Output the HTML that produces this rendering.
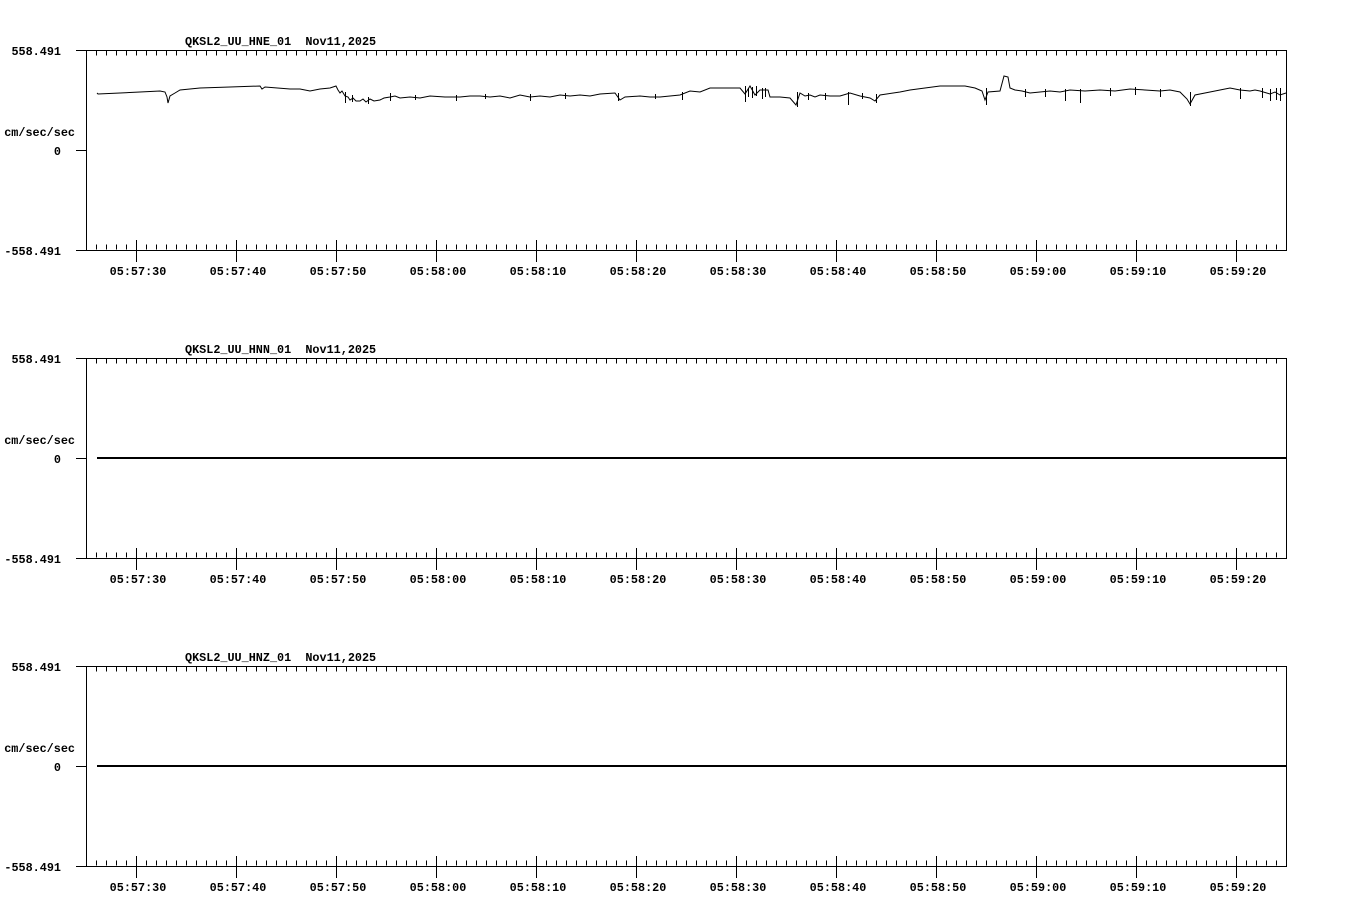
<!DOCTYPE html>
<html><head><meta charset="utf-8"><style>
html,body{margin:0;padding:0;background:#fff;}
svg{display:block}
text{font-family:"Liberation Mono",monospace;font-weight:bold;font-size:11.8px;fill:#000}
</style></head><body>
<svg width="1358" height="924" viewBox="0 0 1358 924" xmlns="http://www.w3.org/2000/svg">
<defs>
<g id="frame" fill="none" stroke="#000" stroke-width="1">
<rect x="86.5" y="50.5" width="1200" height="200"/>
<line x1="76" y1="50.5" x2="86" y2="50.5"/>
<line x1="76" y1="150.5" x2="86" y2="150.5"/>
<line x1="76" y1="250.5" x2="86" y2="250.5"/>
<line x1="96" y1="53" x2="1287" y2="53" stroke-width="5" stroke-dasharray="1 9"/>
<line x1="96" y1="247" x2="1287" y2="247" stroke-width="5" stroke-dasharray="1 9"/>
<line x1="136" y1="251" x2="1287" y2="251" stroke-width="22" stroke-dasharray="1 99"/>
</g>
</defs>

<g transform="translate(0,0)"><use href="#frame"/></g>
<g transform="translate(0,308)"><use href="#frame"/></g>
<g transform="translate(0,616)"><use href="#frame"/></g>

<polyline fill="none" stroke="#000" stroke-width="1" points="97,93 98,94 120,93 140,92 160,91 165,92 167,97 168,103 170,96 175,93 180,90 200,88 230,87 260,86 262,89 265,87 290,89 300,89 310,91 320,89 330,88 336,86 338,90 340,93 342,91 345,96 348,97 350,100 353,98 356,101 360,101 363,99 366,102 370,99 374,101 380,100 384,98 390,97 395,96 400,98 410,97 420,98 430,96 445,97 460,97 470,96 480,96 490,97 500,96 510,98 520,95 530,97 540,96 550,97 560,95 570,96 580,95 590,96 600,94 615,93 620,100 625,97 640,96 650,97 660,97 670,96 680,95 690,91 700,92 710,88 740,88 745,94 750,86 755,95 760,90 768,90 770,97 780,97 790,98 796,105 800,93 805,96 810,95 815,97 820,95 830,96 840,96 850,93 860,96 870,98 875,101 880,95 900,92 910,90 925,88 940,86 965,86 975,88 982,91 985,100 988,92 1000,91 1004,76 1008,77 1010,88 1015,90 1022,91 1030,93 1040,92 1050,91 1060,92 1070,90 1085,91 1100,90 1115,91 1130,89 1145,90 1160,91 1170,90 1180,92 1187,99 1190,104 1195,95 1210,92 1220,90 1230,88 1240,90 1250,91 1255,90 1260,91 1270,94 1275,92 1280,95 1286,93"/>
<g stroke="#000" stroke-width="1">
<line x1="345.5" y1="92" x2="345.5" y2="103"/><line x1="352.5" y1="95" x2="352.5" y2="102"/><line x1="368.5" y1="97" x2="368.5" y2="104"/>
<line x1="390.5" y1="93" x2="390.5" y2="101"/><line x1="415.5" y1="95" x2="415.5" y2="100"/><line x1="456.5" y1="95" x2="456.5" y2="101"/>
<line x1="485.5" y1="94" x2="485.5" y2="99"/><line x1="530.5" y1="94" x2="530.5" y2="101"/><line x1="565.5" y1="93" x2="565.5" y2="99"/>
<line x1="618.5" y1="93" x2="618.5" y2="101"/><line x1="655.5" y1="94" x2="655.5" y2="99"/><line x1="682.5" y1="92" x2="682.5" y2="100"/>
<line x1="745.5" y1="86" x2="745.5" y2="102"/><line x1="748.5" y1="88" x2="748.5" y2="97"/><line x1="752.5" y1="87" x2="752.5" y2="98"/><line x1="756.5" y1="86" x2="756.5" y2="96"/><line x1="762.5" y1="88" x2="762.5" y2="99"/><line x1="765.5" y1="88" x2="765.5" y2="97"/>
<line x1="797.5" y1="92" x2="797.5" y2="107"/><line x1="808.5" y1="93" x2="808.5" y2="100"/><line x1="825.5" y1="93" x2="825.5" y2="100"/>
<line x1="848.5" y1="92" x2="848.5" y2="105"/><line x1="862.5" y1="93" x2="862.5" y2="99"/><line x1="876.5" y1="94" x2="876.5" y2="103"/>
<line x1="986.5" y1="88" x2="986.5" y2="105"/><line x1="1025.5" y1="89" x2="1025.5" y2="97"/><line x1="1045.5" y1="89" x2="1045.5" y2="97"/><line x1="1065.5" y1="89" x2="1065.5" y2="101"/><line x1="1080.5" y1="89" x2="1080.5" y2="103"/>
<line x1="1110.5" y1="88" x2="1110.5" y2="96"/><line x1="1135.5" y1="87" x2="1135.5" y2="95"/><line x1="1160.5" y1="89" x2="1160.5" y2="97"/>
<line x1="1190.5" y1="92" x2="1190.5" y2="106"/><line x1="1240.5" y1="88" x2="1240.5" y2="99"/><line x1="1262.5" y1="88" x2="1262.5" y2="98"/><line x1="1270.5" y1="89" x2="1270.5" y2="101"/>
<line x1="1276.5" y1="88" x2="1276.5" y2="100"/><line x1="1280.5" y1="88" x2="1280.5" y2="101"/>
</g>
<line x1="97" y1="458" x2="1286" y2="458" stroke="#000" stroke-width="2"/>
<line x1="97" y1="766" x2="1286" y2="766" stroke="#000" stroke-width="2"/>

<g>
<text x="185" y="45">QKSL2_UU_HNE_01&#160; Nov11,2025</text>
<text x="61" y="55" text-anchor="end">558.491</text>
<text x="75" y="136" text-anchor="end">cm/sec/sec</text>
<text x="61" y="155" text-anchor="end">0</text>
<text x="61" y="255" text-anchor="end">-558.491</text>
<text y="275" text-anchor="middle"><tspan x="138">05:57:30</tspan><tspan x="238">05:57:40</tspan><tspan x="338">05:57:50</tspan><tspan x="438">05:58:00</tspan><tspan x="538">05:58:10</tspan><tspan x="638">05:58:20</tspan><tspan x="738">05:58:30</tspan><tspan x="838">05:58:40</tspan><tspan x="938">05:58:50</tspan><tspan x="1038">05:59:00</tspan><tspan x="1138">05:59:10</tspan><tspan x="1238">05:59:20</tspan></text>
</g>
<g transform="translate(0,308)">
<text x="185" y="45">QKSL2_UU_HNN_01&#160; Nov11,2025</text>
<text x="61" y="55" text-anchor="end">558.491</text>
<text x="75" y="136" text-anchor="end">cm/sec/sec</text>
<text x="61" y="155" text-anchor="end">0</text>
<text x="61" y="255" text-anchor="end">-558.491</text>
<text y="275" text-anchor="middle"><tspan x="138">05:57:30</tspan><tspan x="238">05:57:40</tspan><tspan x="338">05:57:50</tspan><tspan x="438">05:58:00</tspan><tspan x="538">05:58:10</tspan><tspan x="638">05:58:20</tspan><tspan x="738">05:58:30</tspan><tspan x="838">05:58:40</tspan><tspan x="938">05:58:50</tspan><tspan x="1038">05:59:00</tspan><tspan x="1138">05:59:10</tspan><tspan x="1238">05:59:20</tspan></text>
</g>
<g transform="translate(0,616)">
<text x="185" y="45">QKSL2_UU_HNZ_01&#160; Nov11,2025</text>
<text x="61" y="55" text-anchor="end">558.491</text>
<text x="75" y="136" text-anchor="end">cm/sec/sec</text>
<text x="61" y="155" text-anchor="end">0</text>
<text x="61" y="255" text-anchor="end">-558.491</text>
<text y="275" text-anchor="middle"><tspan x="138">05:57:30</tspan><tspan x="238">05:57:40</tspan><tspan x="338">05:57:50</tspan><tspan x="438">05:58:00</tspan><tspan x="538">05:58:10</tspan><tspan x="638">05:58:20</tspan><tspan x="738">05:58:30</tspan><tspan x="838">05:58:40</tspan><tspan x="938">05:58:50</tspan><tspan x="1038">05:59:00</tspan><tspan x="1138">05:59:10</tspan><tspan x="1238">05:59:20</tspan></text>
</g>
</svg>
</body></html>
